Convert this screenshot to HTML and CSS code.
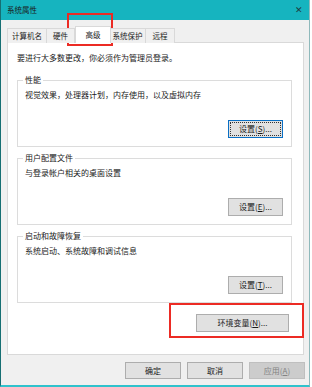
FILE: index.html
```html
<!DOCTYPE html>
<html>
<head>
  <title>系统属性</title>
  <link rel="stylesheet" href="styles.css">
</head>
<body>
  <div class="ventana">
    <div class="titulo">
      <span>系统属性</span>
      <span class="cerrar">✕</span>
    </div>

    <div class="pestanas">
      <div class="pestana">计算机名</div>
      <div class="pestana">硬件</div>
      <div class="pestana activa">高级</div>
      <div class="pestana">系统保护</div>
      <div class="pestana">远程</div>
    </div>

    <div class="panel">
      <p class="aviso">要进行大多数更改，你必须作为管理员登录。</p>

      <div class="grupo">
        <span class="grupo-titulo">性能</span>
        <p class="grupo-texto">视觉效果，处理器计划，内存使用，以及虚拟内存</p>
        <div class="fila">
          <button class="boton foco">设置(<u>S</u>)...</button>
        </div>
      </div>

      <div class="grupo">
        <span class="grupo-titulo">用户配置文件</span>
        <p class="grupo-texto">与登录帐户相关的桌面设置</p>
        <div class="fila">
          <button class="boton">设置(<u>E</u>)...</button>
        </div>
      </div>

      <div class="grupo">
        <span class="grupo-titulo">启动和故障恢复</span>
        <p class="grupo-texto">系统启动、系统故障和调试信息</p>
        <div class="fila">
          <button class="boton">设置(<u>T</u>)...</button>
        </div>
      </div>

      <div class="fila entorno">
        <button class="boton ancho">环境变量(<u>N</u>)...</button>
      </div>
    </div>

    <div class="pie">
      <button class="boton pie-boton">确定</button>
      <button class="boton pie-boton">取消</button>
      <button class="boton pie-boton apagado">应用(<u>A</u>)</button>
    </div>

    <div class="marca marca-pestana"></div>
    <div class="marca marca-entorno"></div>
  </div>
</body>
</html>
```

FILE: styles.css
```css
* {
  box-sizing: border-box;
}

body {
  margin: 0;
  padding: 0;
  background-color: #ffffff;
  font-family: "Noto Sans CJK SC", "Noto Sans", sans-serif;
  font-size: 8px;
  color: #1a1a1a;
}

.ventana {
  position: relative;
  width: 310px;
  height: 387px;
  background-color: #f0f0f0;
  border-left: 1px solid #166f73;
  border-right: 1px solid #8fb9bb;
  border-bottom: 2px solid #2fc2cc;
  display: flex;
  flex-direction: column;
}

.titulo {
  height: 20px;
  background-color: #16b4bf;
  display: flex;
  align-items: center;
  justify-content: space-between;
  padding: 0 6px 0 6px;
  line-height: 10px;
  font-size: 7.5px;
}

.cerrar {
  font-size: 9px;
  color: #1d3d40;
}

.pestanas {
  display: flex;
  align-items: flex-end;
  height: 22px;
  padding-left: 6px;
  position: relative;
  z-index: 1;
}

.pestana {
  height: 15px;
  line-height: 13px;
  padding: 0;
  font-size: 7.5px;
  white-space: nowrap;
  text-align: center;
  border: 1px solid #d9d9d9;
  border-bottom: none;
  background-color: #f0f0f0;
  margin-bottom: -1px;
  margin-right: -1px;
}

.pestana:nth-child(1) { width: 40px; }
.pestana:nth-child(2) { width: 29px; }
.pestana:nth-child(4) { width: 37px; margin-left: -1px; }
.pestana:nth-child(5) { width: 30px; }

.pestana.activa {
  width: 36px;
  height: 17px;
  line-height: 15px;
  margin: 0 -1px -1px 1px;
  background-color: #ffffff;
  position: relative;
}

.panel {
  margin: 0 0 0 6px;
  width: 297px;
  height: 313px;
  background-color: #ffffff;
  border: 1px solid #d9d9d9;
  padding: 0 11px 0 9px;
  display: flex;
  flex-direction: column;
}

.aviso {
  margin: 10px 0 0 0;
  line-height: 10px;
  height: 10px;
}

.grupo {
  margin-top: 17px;
  height: 67px;
  border: 1px solid #dcdcdc;
  padding: 0 8px 8px 7px;
  display: flex;
  flex-direction: column;
}

.grupo + .grupo {
  margin-top: 11px;
}

.grupo-titulo {
  align-self: flex-start;
  margin: -6px 0 0 -2px;
  padding: 0 2px;
  line-height: 10px;
  background-color: #ffffff;
}

.grupo-texto {
  margin: 5px 0 0 0;
  line-height: 10px;
}

.fila {
  margin-top: auto;
  display: flex;
  justify-content: flex-end;
}

.boton {
  font-family: inherit;
  font-size: 8px;
  color: #1a1a1a;
  width: 55px;
  height: 18px;
  padding: 0;
  line-height: 14px;
  background-color: #e1e1e1;
  border: 1px solid #adadad;
  border-radius: 0;
}

.boton.foco {
  border-color: #0a6fc4;
  outline: 1px dotted #333333;
  outline-offset: -3px;
}

.entorno {
  margin-top: 11px;
  margin-right: 3px;
}

.boton.ancho {
  width: 93px;
}

.pie {
  display: flex;
  justify-content: flex-end;
  gap: 6px;
  padding: 7px 4px 0 0;
}

.pie-boton {
  width: 56px;
  height: 17px;
}

.boton.apagado {
  background-color: #cccccc;
  border-color: #bfbfbf;
  color: #838383;
}

.marca {
  position: absolute;
  border: 2px solid #ec2b24;
}

.marca-pestana {
  left: 66px;
  top: 13px;
  width: 46px;
  height: 33px;
}

.marca-entorno {
  left: 168px;
  top: 303px;
  width: 135px;
  height: 35px;
}
```
